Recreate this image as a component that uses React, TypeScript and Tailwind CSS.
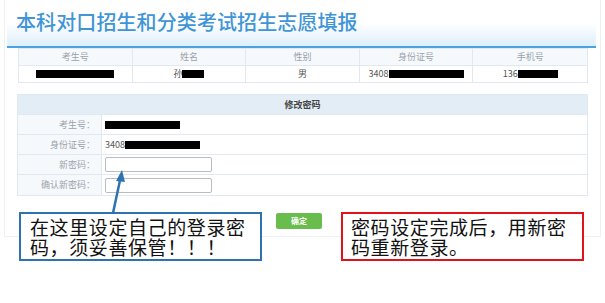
import React from "react"

const cjk = "font-['Noto_Sans_CJK_SC','Noto_Sans',sans-serif]"

function Redact({ w }: { w: number }) {
  return <span className="inline-block h-[8px] bg-black align-middle" style={{ width: w }} />
}

const headers = ["考生号", "姓名", "性别", "身份证号", "手机号"]

export default function App() {
  return (
    <div className={`relative w-[605px] h-[303px] overflow-hidden bg-white ${cjk}`}>
      <div className="ml-[4px] w-[597px] h-[237px] border-x border-b border-[#eef1f4]">
        {/* header */}
        <div className="ml-[2px] mr-[4px] h-[48px] border-b-2 border-[#4aa3df] bg-gradient-to-b from-white via-white to-[#ddeffb] pl-[9px] pt-[8px]">
          <h1 className="text-[20px] leading-[28px] font-medium tracking-[0.1px] text-[#4095d6]">
            本科对口招生和分类考试招生志愿填报
          </h1>
        </div>

        {/* student info */}
        <div className="ml-[13px] w-[570px] border border-[#e1e8ef]">
          <div className="grid grid-cols-5 h-[17px] bg-[#f6f9fc] border-b border-[#e1e8ef]">
            {headers.map((h, i) => (
              <div
                key={h}
                className={`flex items-center justify-center text-[9px] text-[#9aa3ab] ${i < 4 ? "border-r border-[#e1e8ef]" : ""}`}
              >
                {h}
              </div>
            ))}
          </div>
          <div className="grid grid-cols-5 h-[16px] text-[9px] text-[#555]">
            <div className="flex items-center justify-center border-r border-[#e1e8ef]">
              <Redact w={78} />
            </div>
            <div className="flex items-center justify-center border-r border-[#e1e8ef]">
              孙<Redact w={22} />
            </div>
            <div className="flex items-center justify-center border-r border-[#e1e8ef]">男</div>
            <div className="flex items-center justify-center border-r border-[#e1e8ef]">
              3408<Redact w={75} />
            </div>
            <div className="flex items-center justify-center">
              136<Redact w={40} />
            </div>
          </div>
        </div>

        {/* change password */}
        <div className="ml-[12px] mt-[11px] w-[571px] border border-[#e1e8ef]">
          <div className="flex h-[20px] items-center justify-center bg-[#e3edf6] border-b border-[#e1e8ef] text-[9px] font-bold text-[#444]">
            修改密码
          </div>
          {[
            { label: "考生号：", value: <Redact w={75} /> },
            {
              label: "身份证号：",
              value: (
                <span className="flex items-center text-[9px] text-[#555]">
                  3408<Redact w={75} />
                </span>
              ),
            },
            {
              label: "新密码：",
              value: <div className="h-[15px] w-[107px] rounded-[2px] border border-[#b9bdc1] bg-white" />,
            },
            {
              label: "确认新密码：",
              value: <div className="h-[15px] w-[107px] rounded-[2px] border border-[#b9bdc1] bg-white" />,
            },
          ].map((r, i) => (
            <div key={r.label} className={`flex h-[20px] ${i < 3 ? "border-b border-[#e1e8ef]" : ""}`}>
              <div className="flex w-[84px] items-center justify-end pr-[6px] bg-[#f6f9fc] border-r border-[#e1e8ef] text-[9px] text-[#9aa3ab]">
                {r.label}
              </div>
              <div className="flex flex-1 items-center pl-[3px]">{r.value}</div>
            </div>
          ))}
        </div>

        <div className="ml-[271px] mt-[17px] flex h-[16px] w-[46px] items-center justify-center rounded-[2px] bg-[#69bd4c] text-[8px] font-bold text-white">
          确定
        </div>
      </div>

      {/* annotation callouts */}
      <svg className="absolute left-0 top-0" width="605" height="303">
        <line x1="113" y1="213" x2="120.5" y2="178" stroke="#2f72b0" strokeWidth="2.5" />
        <polygon points="122,170 116,181 125,182" fill="#2f72b0" />
      </svg>
      <div className="absolute left-[19px] top-[212px] w-[243px] h-[49px] border-2 border-[#2f72b0] bg-white pl-[9px] pt-[3px] text-[19px] leading-[20px] tracking-[0.6px] text-[#111]">
        在这里设定自己的登录密
        <br />
        码，须妥善保管！！！
      </div>
      <div className="absolute left-[341px] top-[212px] w-[243px] h-[49px] border-2 border-[#e3121a] bg-white pl-[8px] pt-[3px] text-[19px] leading-[20px] tracking-[0.6px] text-[#111]">
        密码设定完成后，用新密
        <br />
        码重新登录。
      </div>
    </div>
  )
}
